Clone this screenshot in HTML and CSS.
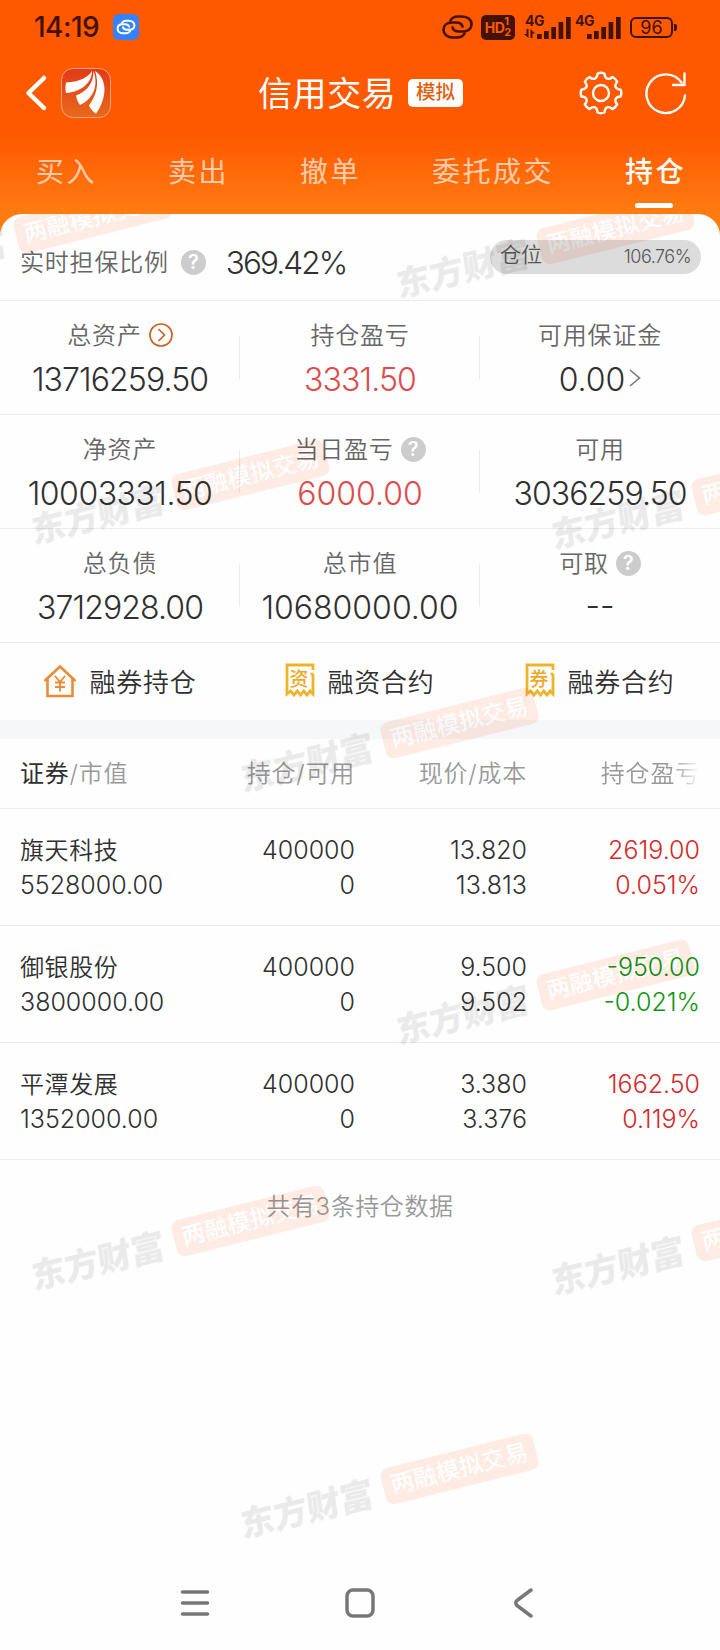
FILE: index.html
```html
<!DOCTYPE html>
<html lang="zh-CN">
<head>
    <meta charset="UTF-8">
    <meta name="viewport" content="width=device-width, initial-scale=1.0">
    <title>信用交易</title>
    <link rel="stylesheet" href="styles.css">
</head>
<body>
    <div class="phone">
        <!-- 顶部 -->
        <div class="header">
            <div class="status">
                <span class="time">14:19</span>
                <svg class="app-link" width="26" height="26" viewBox="0 0 26 26">
                    <rect width="26" height="26" rx="6" fill="#3482ff"/>
                    <g fill="none" stroke="#fff" stroke-width="3.300" stroke-linecap="round" transform="translate(3.700 5.800) scale(.6)">
                        <path d="M8.500 5.500C10 2.500 13 1.500 16 1.500h4c6 0 9.500 3.500 9.500 7.500 0 4.500-3.500 7.500-8.500 7.500h-4c-3.500 0-6-2-6.500-4"/>
                        <path transform="rotate(180 15.500 12)" d="M8.500 5.500C10 2.500 13 1.500 16 1.500h4c6 0 9.500 3.500 9.500 7.500 0 4.500-3.500 7.500-8.500 7.500h-4c-3.500 0-6-2-6.500-4"/>
                    </g>
                </svg>
                <div class="status-right">
                    <svg class="chain" width="31" height="24" viewBox="0 0 31 24" fill="none" stroke="#421202" stroke-width="2.700" stroke-linecap="round">
                        <path d="M8.500 5.500C10 2.500 13 1.500 16 1.500h4c6 0 9.500 3.500 9.500 7.500 0 4.500-3.500 7.500-8.500 7.500h-4c-3.500 0-6-2-6.500-4"/>
                        <path transform="rotate(180 15.500 12)" d="M8.500 5.500C10 2.500 13 1.500 16 1.500h4c6 0 9.500 3.500 9.500 7.500 0 4.500-3.500 7.500-8.500 7.500h-4c-3.500 0-6-2-6.500-4"/>
                    </svg>
                    <div class="hd"><b>HD</b><i><em>1</em><em>2</em></i></div>
                    <svg class="signal" width="47" height="26" viewBox="0 0 47 26">
                        <text x="1" y="12" class="net">4G</text>
                        <path class="bar" d="M13 20h4.700v5H13zM20 17h4.700v8H20zM27.300 13H32v12h-4.700zM34.600 8h4.700v17h-4.700zM42 3h4.700v22H42z"/>
                        <path class="bar" d="M4.500 15v9L0 20h2.500v-5zM6.500 15l4.500 4.500H8.500V24h-2z"/>
                    </svg>
                    <svg class="signal second" width="47" height="26" viewBox="0 0 47 26">
                        <text x="1" y="12" class="net">4G</text>
                        <path class="bar" d="M13 20h4.700v5H13zM20 17h4.700v8H20zM27.300 13H32v12h-4.700zM34.600 8h4.700v17h-4.700zM42 3h4.700v22H42z"/>
                    </svg>
                    <div class="battery"><span>96</span></div>
                </div>
            </div>

            <div class="title-bar">
                <svg class="back" width="24" height="38" viewBox="0 0 24 38" fill="none" stroke="#fff" stroke-width="4.500" stroke-linecap="round" stroke-linejoin="round">
                    <path d="M20 4L4.500 19 20 34"/>
                </svg>
                <svg class="logo" width="50" height="50" viewBox="0 0 50 50">
                    <defs>
                        <linearGradient id="logoBg" x1="0" y1="0" x2="0" y2="1">
                            <stop offset="0" stop-color="#e23a16"/>
                            <stop offset="1" stop-color="#e86a1c"/>
                        </linearGradient>
                    </defs>
                    <rect x=".5" y=".5" width="49" height="49" rx="11.500" fill="url(#logoBg)" stroke="#f9a37a"/>
                    <g fill="#fff">
                        <path d="M31 3C27 9 20 13.500 5 14.500c-.8 3.500-.8 7 0 10.500C20 24 31 15 31 3z"/>
                        <path d="M32.500 3c0 12-6 20-17.500 24.500 .5 3.500 2 7 4 9.500C32 31 38 18 32.500 3z"/>
                        <path d="M34 3c4.500 13 1.500 24-6 34.500 1.500 3.500 4 6 7 8C45 32 48 12 34 3z"/>
                    </g>
                </svg>
                <div class="title">
                    <h1>信用交易</h1>
                    <span class="tag">模拟</span>
                </div>
                <svg class="gear" width="44" height="44" viewBox="0 0 44 44" fill="none" stroke="#fff" stroke-width="2.400" stroke-linejoin="round">
                    <path d="M18.500 2.500c2-.8 5-.8 7 0 .3 5.500 4 7 8 3.500 2 1 3.800 2.800 4.700 4.700-3.500 4-2 7.600 3.400 7.900.8 2 .8 5 0 6.900-5.400.3-6.900 4-3.400 7.900-1 2-2.800 3.700-4.700 4.700-4-3.600-7.700-2-8 3.400-2 .8-5 .8-7 0-.3-5.400-4-7-8-3.400-2-1-3.700-2.700-4.700-4.700 3.500-3.900 2-7.600-3.400-7.900-.8-2-.8-5 0-6.900 5.400-.3 6.900-3.900 3.400-7.900 1-1.900 2.700-3.700 4.700-4.700 4 3.500 7.700 2 8-3.500z"/>
                    <circle cx="22" cy="22" r="8"/>
                </svg>
                <svg class="refresh" width="42" height="44" viewBox="0 0 42 44" fill="none" stroke="#fff" stroke-width="2.400" stroke-linecap="round" stroke-linejoin="round">
                    <path d="M40 24.500A19.300 19.300 0 1 1 36.500 11.500"/>
                    <path d="M39.500 2.500v11.500H28"/>
                </svg>
            </div>

            <div class="tabs">
                <span>买入</span>
                <span>卖出</span>
                <span>撤单</span>
                <span>委托成交</span>
                <span class="active">持仓</span>
            </div>
        </div>

        <div class="card">
            <!-- 担保比例 -->
            <div class="ratio">
                <span class="label">实时担保比例</span>
                <span class="help">?</span>
                <span class="num">369.42%</span>
                <div class="position"><span>仓位</span><span class="percent">106.76%</span></div>
            </div>

            <!-- 资产 -->
            <div class="stats">
                <div class="stat">
                    <div class="label">总资产
                        <svg class="more" width="24" height="24" viewBox="0 0 24 24" fill="none" stroke="#cb6424" stroke-width="1.700"><circle cx="12" cy="12" r="11"/><path d="M9.500 6l6 6-6 6"/></svg>
                    </div>
                    <div class="num tight">13716259.50</div>
                </div>
                <div class="stat">
                    <div class="label">持仓盈亏</div>
                    <div class="num tight up">3331.50</div>
                </div>
                <div class="stat">
                    <div class="label">可用保证金</div>
                    <div class="num">0.00<svg class="arrow" width="12" height="18" viewBox="0 0 12 18" fill="none" stroke="#777" stroke-width="1.600"><path d="M1 1l9.500 8L1 17"/></svg></div>
                </div>
                <div class="stat">
                    <div class="label">净资产</div>
                    <div class="num snug">10003331.50</div>
                </div>
                <div class="stat">
                    <div class="label">当日盈亏<span class="help">?</span></div>
                    <div class="num up">6000.00</div>
                </div>
                <div class="stat">
                    <div class="label">可用</div>
                    <div class="num tight">3036259.50</div>
                </div>
                <div class="stat">
                    <div class="label">总负债</div>
                    <div class="num tight">3712928.00</div>
                </div>
                <div class="stat">
                    <div class="label">总市值</div>
                    <div class="num">10680000.00</div>
                </div>
                <div class="stat">
                    <div class="label">可取<span class="help">?</span></div>
                    <div class="num empty">--</div>
                </div>
            </div>

            <div class="links">
                <a class="link">
                    <svg width="34" height="34" viewBox="0 0 34 34" fill="none" stroke="#ee8a35" stroke-width="2.600">
                        <path d="M1.500 17L17 2.500 32.500 17M4.500 15v17h25V15"/>
                        <path d="M12 12l5 6 5-6M17 18v9.500M12 18.500h10M12 23h10" stroke-width="1.900"/>
                    </svg>
                    <span>融券持仓</span>
                </a>
                <a class="link">
                    <svg width="30" height="35" viewBox="0 0 30 35">
                        <path d="M28 7V2H2v29l3.500-3 3.500 4 3.300-4 3.200 4 3.200-4 3.300 4 3-4 3 3V12l-2-2" fill="none" stroke="#efb32a" stroke-width="2.800"/>
                        <text x="14.500" y="22.500" class="bill">资</text>
                    </svg>
                    <span>融资合约</span>
                </a>
                <a class="link">
                    <svg width="30" height="35" viewBox="0 0 30 35">
                        <path d="M28 7V2H2v29l3.500-3 3.500 4 3.300-4 3.200 4 3.200-4 3.300 4 3-4 3 3V12l-2-2" fill="none" stroke="#efb32a" stroke-width="2.800"/>
                        <text x="14.500" y="22.500" class="bill">券</text>
                    </svg>
                    <span>融券合约</span>
                </a>
            </div>

            <!-- 持仓列表 -->
            <div class="table">
                <div class="row head">
                    <div><b>证券</b>/市值</div>
                    <div>持仓/可用</div>
                    <div>现价/成本</div>
                    <div class="fade">持仓盈亏</div>
                </div>
                <div class="row">
                    <div><p class="name">旗天科技</p><p>5528000.00</p></div>
                    <div><p>400000</p><p>0</p></div>
                    <div><p>13.820</p><p>13.813</p></div>
                    <div class="red"><p>2619.00</p><p>0.051%</p></div>
                </div>
                <div class="row">
                    <div><p class="name">御银股份</p><p>3800000.00</p></div>
                    <div><p>400000</p><p>0</p></div>
                    <div><p>9.500</p><p>9.502</p></div>
                    <div class="green"><p>-950.00</p><p>-0.021%</p></div>
                </div>
                <div class="row">
                    <div><p class="name">平潭发展</p><p>1352000.00</p></div>
                    <div><p>400000</p><p>0</p></div>
                    <div><p>3.380</p><p>3.376</p></div>
                    <div class="red"><p>1662.50</p><p>0.119%</p></div>
                </div>
            </div>
            <div class="total">共有3条持仓数据</div>

            <!-- 水印 -->
            <div class="marks">
                <div class="mark m1"><b>东方财富</b><span>两融模拟交易</span></div>
                <div class="mark m2"><b>东方财富</b><span>两融模拟交易</span></div>
                <div class="mark m3"><b>东方财富</b><span>两融模拟交易</span></div>
                <div class="mark m4"><b>东方财富</b><span>两融模拟交易</span></div>
                <div class="mark m5"><b>东方财富</b><span>两融模拟交易</span></div>
                <div class="mark m6"><b>东方财富</b><span>两融模拟交易</span></div>
                <div class="mark m7"><b>东方财富</b><span>两融模拟交易</span></div>
                <div class="mark m8"><b>东方财富</b><span>两融模拟交易</span></div>
                <div class="mark m9"><b>东方财富</b><span>两融模拟交易</span></div>
            </div>
        </div>

        <!-- 系统导航 -->
        <div class="nav">
            <svg width="30" height="30" viewBox="0 0 30 30"><path d="M2.500 4h25M2.500 15h25M2.500 26h25"/></svg>
            <svg width="30" height="30" viewBox="0 0 30 30"><rect x="2" y="2" width="26" height="26" rx="6"/></svg>
            <svg width="30" height="30" viewBox="0 0 30 30"><path d="M21 2L7 12.500Q4.500 15 7 17.500L21 28"/></svg>
        </div>
    </div>
</body>
</html>
```
FILE: styles.css
```css
*{
    margin: 0;
    padding: 0;
    box-sizing: border-box;
}
body{
    font-family: Inter, "Noto Sans CJK SC", sans-serif;
    color: #303030;
    background-color: #fefefe;
}
.phone{
    width: 720px;
    height: 1650px;
    overflow: hidden;
    display: flex;
    flex-direction: column;
    background: linear-gradient(#ff5900 0, #ff5900 135px, #ff7c12 214px, #ff7c12 250px, #fefefe 250px);
}
svg{
    display: block;
    flex: none;
}
/* 顶部 */
.header{
    height: 214px;
    flex: none;
}
.status{
    height: 54px;
    padding: 0 43px 0 34px;
    display: flex;
    align-items: center;
    color: #421202;
}
.time{
    width: 79px;
    font-size: 28px;
    font-weight: 500;
    letter-spacing: -.5px;
}
.status-right{
    margin-left: auto;
    display: flex;
    align-items: center;
}
.hd{
    width: 34px;
    height: 25px;
    margin: 0 9px 0 8px;
    border-radius: 5px;
    background-color: #421202;
    color: #ff5900;
    display: flex;
    align-items: center;
    justify-content: center;
}
.hd b{
    font-size: 14px;
    letter-spacing: -.5px;
}
.hd i{
    display: flex;
    flex-direction: column;
}
.hd em{
    font-size: 11px;
    line-height: 11px;
    font-style: normal;
    font-weight: 700;
}
.signal{
    overflow: visible;
}
.second{
    margin-left: 3px;
}
.net{
    font-size: 14px;
    font-weight: 700;
    letter-spacing: -.5px;
    fill: #421202;
}
.bar{
    fill: #421202;
}
.battery{
    position: relative;
    width: 43px;
    height: 21px;
    margin: 0 4px 0 9px;
    border: 2px solid #421202;
    border-radius: 6px;
    font-size: 18px;
    line-height: 17px;
    text-align: center;
}
.battery::after{
    content: "";
    position: absolute;
    right: -6px;
    top: 5px;
    width: 3px;
    height: 7px;
    border-radius: 0 2px 2px 0;
    background-color: #421202;
}
.title-bar{
    height: 78px;
    padding: 0 33px 0 24px;
    display: flex;
    align-items: center;
}
.logo{
    margin-left: 13px;
}
.title{
    margin-left: 147px;
    display: flex;
    align-items: center;
}
h1{
    width: 150px;
    font-size: 34px;
    line-height: 48px;
    font-weight: 400;
    letter-spacing: .6px;
    color: #fff;
    white-space: nowrap;
    padding-top: 2px;
}
.tag{
    width: 55px;
    height: 28px;
    border-radius: 5px;
    background-color: #fff;
    color: #e0600f;
    font-size: 19.500px;
    line-height: 27px;
    font-weight: 500;
    text-align: center;
}
.gear{
    margin-left: auto;
}
.refresh{
    margin-left: 22px;
}
.tabs{
    height: 82px;
    padding: 17px 34px 0 36px;
    display: flex;
    justify-content: space-between;
    font-size: 28px;
    line-height: 46px;
    letter-spacing: 2.500px;
    color: rgba(255, 255, 255, .68);
}
.tabs .active{
    position: relative;
    color: #fff;
    font-weight: 500;
}
.active::after{
    content: "";
    position: absolute;
    left: 10px;
    bottom: 6px;
    width: 38px;
    height: 5px;
    border-radius: 3px;
    background-color: #fff;
}
/* 内容 */
.card{
    position: relative;
    height: 1350px;
    flex: none;
    overflow: hidden;
    border-radius: 22px 22px 0 0;
    background-color: #fefefe;
}
.label{
    color: #666;
    font-size: 24px;
    letter-spacing: .8px;
    font-weight: 350;
}
.num{
    font-size: 32px;
    font-weight: 350;
    color: #303030;
}
.tight{
    letter-spacing: -.9px;
}
.snug{
    letter-spacing: -.5px;
}
.help{
    width: 25px;
    height: 25px;
    border-radius: 50%;
    background-color: #ccc;
    color: #fff;
    font-size: 20px;
    line-height: 25px;
    font-weight: 600;
    letter-spacing: 0;
    text-align: center;
}
.ratio{
    height: 87px;
    padding: 10px 19px 0 20px;
    display: flex;
    align-items: center;
    border-bottom: 1px solid #ebebeb;
}
.ratio .label{
    margin-top: -4px;
}
.ratio .help{
    margin: 0 20px 0 12px;
}
.ratio .num{
    font-size: 31.500px;
    letter-spacing: -1.900px;
}
.position{
    width: 211px;
    height: 34px;
    margin: -11px 0 0 auto;
    padding: 0 10px;
    border-radius: 17px;
    background-color: #dcdcdc;
    color: #555;
    display: flex;
    align-items: center;
    justify-content: space-between;
    font-size: 21px;
    line-height: 30px;
    font-weight: 350;
}
.position span:first-child{
    margin-top: -3px;
}
.percent{
    font-size: 18px;
    letter-spacing: -.5px;
}
.stats{
    display: grid;
    grid-template-columns: repeat(3, 240px);
    grid-auto-rows: 114px;
}
.stat{
    position: relative;
    padding-top: 17px;
    border-bottom: 1px solid #ebebeb;
    display: flex;
    flex-direction: column;
    align-items: center;
}
.stat:not(:nth-child(3n))::after{
    content: "";
    position: absolute;
    right: 0;
    top: 35px;
    width: 1px;
    height: 43px;
    background-color: #ebebeb;
}
.stat .label{
    height: 36px;
    margin-top: -2px;
    padding-bottom: 2px;
    display: flex;
    align-items: center;
    gap: 7px;
}
.stat .label svg,
.stat .help{
    position: relative;
    top: 2px;
}
.stat .num{
    height: 50px;
    padding-top: 4px;
    display: flex;
    align-items: center;
}
.num.up{
    color: #dc4c4c;
}
.stat .empty{
    padding-top: 0;
}
.arrow{
    margin-left: 4px;
    margin-top: -3px;
}
.links{
    height: 96px;
    padding-bottom: 2px;
    display: grid;
    grid-template-columns: repeat(3, 240px);
    border-bottom: 19px solid #f6f7f9;
}
.link{
    display: flex;
    align-items: center;
    justify-content: center;
    gap: 12px;
    font-size: 26px;
    letter-spacing: .8px;
    font-weight: 350;
}
.bill{
    font-size: 19px;
    font-weight: 500;
    fill: #efa92a;
    text-anchor: middle;
}
/* 列表 */
.row{
    height: 117px;
    padding: 24px 20px 0;
    border-bottom: 1px solid #ebebeb;
    display: grid;
    grid-template-columns: 163px 172px 172px 173px;
    font-size: 25px;
    line-height: 35px;
    font-weight: 350;
    text-align: right;
}
.row > div:first-child{
    text-align: left;
}
.name{
    font-size: 24px;
    letter-spacing: .6px;
}
.head{
    height: 70px;
    padding-top: 17px;
    font-size: 24px;
    letter-spacing: .8px;
    color: #999;
}
.head b{
    font-weight: 400;
    color: #303030;
}
.fade{
    -webkit-mask-image: linear-gradient(to right, #000 84%, transparent);
    mask-image: linear-gradient(to right, #000 84%, transparent);
}
.red{
    color: #d42a2a;
}
.green{
    color: #0f960f;
}
.total{
    padding-top: 29px;
    text-align: center;
    font-size: 24px;
    line-height: 36px;
    font-weight: 350;
    letter-spacing: .6px;
    color: #999;
}
/* 水印 */
.marks{
    position: absolute;
    top: 0;
    left: 0;
    width: 720px;
    height: 1350px;
    pointer-events: none;
    mix-blend-mode: multiply;
}
.mark{
    position: absolute;
    height: 36px;
    display: flex;
    align-items: center;
    white-space: nowrap;
    transform: rotate(-14deg);
    transform-origin: 0 100%;
}
.mark b{
    width: 149px;
    padding: 6px 0 0 2px;
    font-size: 34px;
    line-height: 36px;
    font-weight: 900;
    color: #ebebeb;
    transform: skewX(-6deg);
}
.mark span{
    width: 157px;
    height: 37px;
    border-radius: 8px;
    background-color: #ffece4;
    color: #fff;
    font-size: 23.500px;
    line-height: 36px;
    font-weight: 500;
    text-align: center;
}
.m1{ left: -124px; top: 40px; }
.m2{ left: 399px; top: 51px; }
.m3{ left: 34px; top: 297px; }
.m4{ left: 554px; top: 302px; }
.m5{ left: 243px; top: 545px; }
.m6{ left: 399px; top: 797px; }
.m7{ left: 34px; top: 1043px; }
.m8{ left: 554px; top: 1048px; }
.m9{ left: 243px; top: 1291px; }
/* 系统导航 */
.nav{
    height: 78px;
    padding: 0 180px;
    display: flex;
    align-items: center;
    justify-content: space-between;
}
.nav svg{
    fill: none;
    stroke: #777;
    stroke-width: 3.500;
    stroke-linecap: round;
    stroke-linejoin: round;
}
```
